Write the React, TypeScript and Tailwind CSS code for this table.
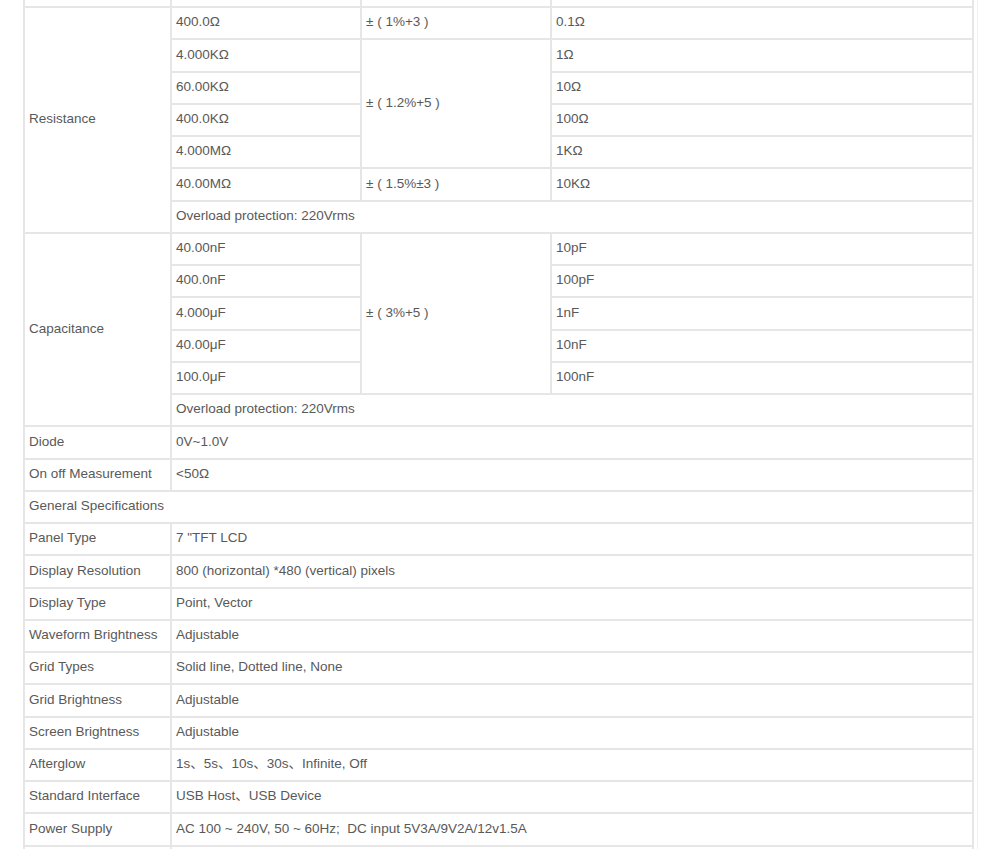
import React from "react";

const B = "border-2 border-[#e6e6e6]";
const td = `${B} pl-[4px] pr-[4px] pb-[2px] align-middle whitespace-nowrap`;

export default function App() {
  const rowH = "h-[32.25px]";
  return (
    <div className="w-[1000px] h-[849px] overflow-hidden bg-white">
      <div className="pl-[23px] w-[978px] border-r border-[#f2f2f2]">
        <table
          className="table-fixed border-collapse w-[951px] text-[13.5px] leading-none text-[#595959]"
          style={{ fontFamily: '"Liberation Sans", Arial, "Noto Sans CJK SC", sans-serif' }}
        >
          <colgroup>
            <col className="w-[147px]" />
            <col className="w-[190px]" />
            <col className="w-[190px]" />
            <col />
          </colgroup>
          <tbody>
            <tr className="h-[7px]">
              <td className={`${B} border-t-0`} />
              <td className={`${B} border-t-0`} />
              <td className={`${B} border-t-0`} />
              <td className={`${B} border-t-0`} />
            </tr>
            <tr className={rowH}>
              <td className={td} rowSpan={7}>Resistance</td>
              <td className={td}>400.0Ω</td>
              <td className={td}>± ( 1%+3 )</td>
              <td className={td}>0.1Ω</td>
            </tr>
            <tr className={rowH}>
              <td className={td}>4.000KΩ</td>
              <td className={td} rowSpan={4}>± ( 1.2%+5 )</td>
              <td className={td}>1Ω</td>
            </tr>
            <tr className={rowH}>
              <td className={td}>60.00KΩ</td>
              <td className={td}>10Ω</td>
            </tr>
            <tr className={rowH}>
              <td className={td}>400.0KΩ</td>
              <td className={td}>100Ω</td>
            </tr>
            <tr className={rowH}>
              <td className={td}>4.000MΩ</td>
              <td className={td}>1KΩ</td>
            </tr>
            <tr className={rowH}>
              <td className={td}>40.00MΩ</td>
              <td className={td}>± ( 1.5%±3 )</td>
              <td className={td}>10KΩ</td>
            </tr>
            <tr className={rowH}>
              <td className={td} colSpan={3}>Overload protection: 220Vrms</td>
            </tr>
            <tr className={rowH}>
              <td className={td} rowSpan={6}>Capacitance</td>
              <td className={td}>40.00nF</td>
              <td className={td} rowSpan={5}>± ( 3%+5 )</td>
              <td className={td}>10pF</td>
            </tr>
            <tr className={rowH}>
              <td className={td}>400.0nF</td>
              <td className={td}>100pF</td>
            </tr>
            <tr className={rowH}>
              <td className={td}>4.000μF</td>
              <td className={td}>1nF</td>
            </tr>
            <tr className={rowH}>
              <td className={td}>40.00μF</td>
              <td className={td}>10nF</td>
            </tr>
            <tr className={rowH}>
              <td className={td}>100.0μF</td>
              <td className={td}>100nF</td>
            </tr>
            <tr className={rowH}>
              <td className={td} colSpan={3}>Overload protection: 220Vrms</td>
            </tr>
            {[
              ["Diode", "0V~1.0V"],
              ["On off Measurement", "<50Ω"],
            ].map(([a, b]) => (
              <tr key={a} className={rowH}>
                <td className={td}>{a}</td>
                <td className={td} colSpan={3}>{b}</td>
              </tr>
            ))}
            <tr className={rowH}>
              <td className={td} colSpan={4}>General Specifications</td>
            </tr>
            {[
              ["Panel Type", '7 "TFT LCD'],
              ["Display Resolution", "800 (horizontal) *480 (vertical) pixels"],
              ["Display Type", "Point, Vector"],
              ["Waveform Brightness", "Adjustable"],
              ["Grid Types", "Solid line, Dotted line, None"],
              ["Grid Brightness", "Adjustable"],
              ["Screen Brightness", "Adjustable"],
              ["Afterglow", "1s、5s、10s、30s、Infinite, Off"],
              ["Standard Interface", "USB Host、USB Device"],
              ["Power Supply", "AC 100 ~ 240V, 50 ~ 60Hz;  DC input 5V3A/9V2A/12v1.5A"],
            ].map(([a, b]) => (
              <tr key={a} className={rowH}>
                <td className={td}>{a}</td>
                <td className={`${td} whitespace-pre`} colSpan={3}>{b}</td>
              </tr>
            ))}
            <tr className={rowH}>
              <td className={td}>&nbsp;</td>
              <td className={td} colSpan={3}>&nbsp;</td>
            </tr>
          </tbody>
        </table>
      </div>
    </div>
  );
}
